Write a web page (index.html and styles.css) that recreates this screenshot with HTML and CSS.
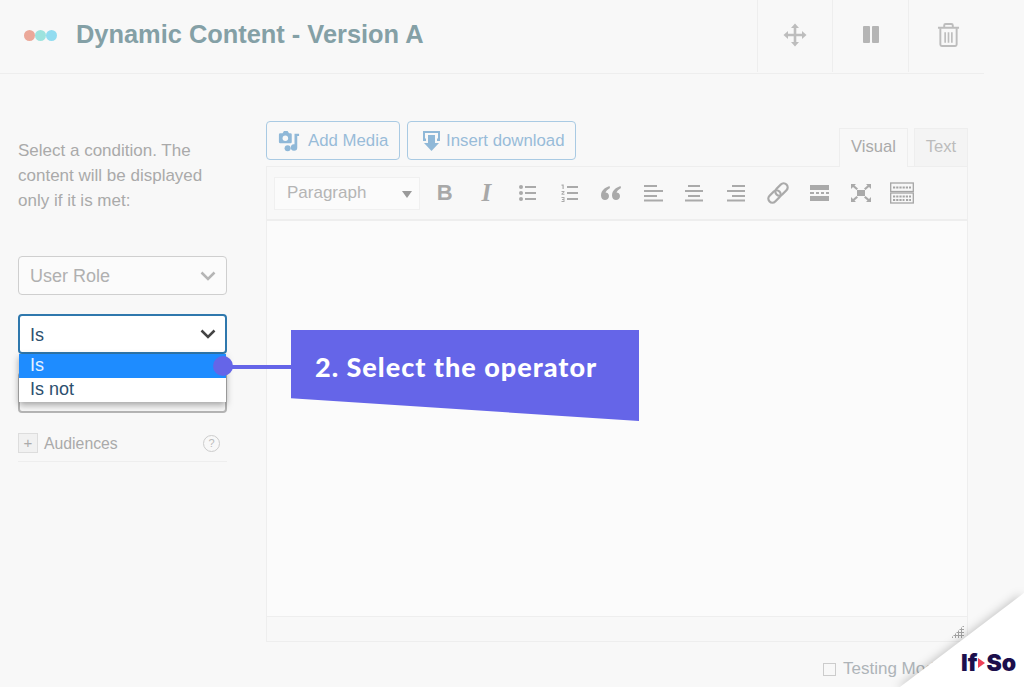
FILE: index.html
```html
<!DOCTYPE html>
<html lang="en">
<head>
    <meta charset="UTF-8">
    <meta name="viewport" content="width=device-width, initial-scale=1.0">
    <title>Dynamic Content - Version A</title>
    <link rel="stylesheet" href="styles.css">
</head>
<body>
<div class="page">

    <!-- Header -->
    <header class="version-header">
        <div class="dots">
            <span class="dot dot-red"></span>
            <span class="dot dot-green"></span>
            <span class="dot dot-blue"></span>
        </div>
        <h1 class="version-title">Dynamic Content - Version A</h1>
        <div class="version-actions">
            <div class="action action-move">
                <svg width="24" height="24" viewBox="0 0 24 24" fill="none" stroke="#bdbdbd" stroke-width="2.600"><path d="M12 3v18M3 12h18"/><path d="M12 0.500l4 4.500H8zM12 23.500l4-4.500H8zM0.500 12L5 8v8zM23.500 12L19 8v8z" fill="#bdbdbd" stroke="none"/></svg>
            </div>
            <div class="action action-pause">
                <svg width="16" height="17" viewBox="0 0 16 17" fill="#b5b5b5"><rect width="7" height="17" rx="1"/><rect x="9" width="7" height="17" rx="1"/></svg>
            </div>
            <div class="action action-trash">
                <svg width="23" height="24" viewBox="0 0 24 25" fill="none" stroke="#bdbdbd" stroke-width="2"><path d="M1 5h22M7.500 5V2.500q0-1.500 1.500-1.500h6q1.500 0 1.500 1.500V5"/><path d="M3.500 5.500v17q0 1.500 1.500 1.500h14q1.500 0 1.500-1.500v-17"/><path d="M8.500 9.500v11M12 9.500v11M15.500 9.500v11" stroke-width="1.700"/></svg>
            </div>
        </div>
    </header>

    <div class="version-body">

        <!-- Conditions -->
        <aside class="conditions">
            <p class="conditions-text">Select a condition. The content will be displayed only if it is met:</p>
            <div class="select select-faded">
                <span>User Role</span>
                <svg class="chevron" width="16" height="10" viewBox="0 0 16 10" fill="none" stroke="#b5b5b5" stroke-width="2.500"><path d="M1.500 1.500L8 8l6.500-6.500"/></svg>
            </div>
            <div class="select select-open">
                <span>Is</span>
                <svg class="chevron" width="16" height="10" viewBox="0 0 16 10" fill="none" stroke="#444" stroke-width="2.500"><path d="M1.500 1.500L8 8l6.500-6.500"/></svg>
                <ul class="select-menu">
                    <li class="selected">Is</li>
                    <li>Is not</li>
                </ul>
            </div>
            <div class="select select-under"></div>
            <div class="audiences">
                <span class="plus-box">+</span>
                <span class="audiences-label">Audiences</span>
                <span class="help">?</span>
            </div>
        </aside>

        <!-- Editor -->
        <section class="editor-wrap">
            <div class="media-row">
                <button class="media-button media-add">
                    <svg width="22" height="22" viewBox="0 0 24 24" fill="#8fb8d8"><path d="M1 5q0-1.500 1.500-1.500H5L6.500 1h4L12 3.500h1.500Q15 3.500 15 5v8q0 1.500-1.500 1.500h-11Q1 14.500 1 13z"/><circle cx="8" cy="9" r="3" fill="#f8f8f8"/><path d="M18 4h5v2.500h-2v12.500a3.500 3.500 0 1 1-3-3.400z"/><circle cx="10.500" cy="20" r="3.300"/></svg>
                    Add Media
                </button>
                <button class="media-button media-download">
                    <svg width="17" height="22" viewBox="0 0 17 22" fill="#8fb8d8"><path d="M0 1h17v10h-3V8.500h1V3H2v5.500h1V11H0z"/><path d="M5 5h7v8h4l-7.500 8L1 13h4z"/></svg>
                    Insert download
                </button>
                <div class="editor-tabs">
                    <span class="tab tab-active">Visual</span>
                    <span class="tab">Text</span>
                </div>
            </div>

            <div class="editor">
                <div class="toolbar">
                    <div class="format-select">
                        <span>Paragraph</span>
                        <i class="caret"></i>
                    </div>
                    <span class="tool tool-letter tool-bold">B</span>
                    <span class="tool tool-letter tool-italic">I</span>
                    <span class="tool">
                        <svg width="20" height="20" viewBox="0 0 20 20" fill="#aaa"><circle cx="3" cy="4" r="2"/><circle cx="3" cy="10" r="2"/><circle cx="3" cy="16" r="2"/><rect x="7" y="3" width="11" height="2"/><rect x="7" y="9" width="11" height="2"/><rect x="7" y="15" width="11" height="2"/></svg>
                    </span>
                    <span class="tool">
                        <svg width="20" height="20" viewBox="0 0 20 20" fill="#aaa"><path d="M1.500 1.500h2.200v4.500H2.500V2.700h-1zM1.500 8h3v.900l-1.800 1.800h1.800v1h-3v-.900l1.800-1.800H1.500zM1.500 14h3v5h-3v-1h2v-1h-1.500v-1h1.500v-1h-2z"/><rect x="7" y="3" width="11" height="2"/><rect x="7" y="9" width="11" height="2"/><rect x="7" y="15" width="11" height="2"/></svg>
                    </span>
                    <span class="tool">
                        <svg width="22" height="18" viewBox="0 0 22 18" fill="#aaa"><path d="M9.500 2C5 3.500 1 6.500 1 11.500 1 14.500 3 16 5 16s4-1.500 4-4-2-3.500-3.500-3.500c.5-1.500 2-3 4.500-4.500zM20.500 2C16 3.500 12 6.500 12 11.500c0 3 2 4.500 4 4.500s4-1.500 4-4-2-3.500-3.500-3.500c.5-1.500 2-3 4.500-4.500z"/></svg>
                    </span>
                    <span class="tool">
                        <svg width="20" height="18" viewBox="0 0 20 18" fill="#aaa"><rect x="1" y="1" width="13" height="2"/><rect x="1" y="6" width="19" height="2"/><rect x="1" y="11" width="13" height="2"/><rect x="1" y="15.500" width="19" height="2"/></svg>
                    </span>
                    <span class="tool">
                        <svg width="20" height="18" viewBox="0 0 20 18" fill="#aaa"><rect x="4" y="1" width="12" height="2"/><rect x="1" y="6" width="18" height="2"/><rect x="4" y="11" width="12" height="2"/><rect x="1" y="15.500" width="18" height="2"/></svg>
                    </span>
                    <span class="tool">
                        <svg width="20" height="18" viewBox="0 0 20 18" fill="#aaa"><rect x="6" y="1" width="13" height="2"/><rect x="1" y="6" width="18" height="2"/><rect x="6" y="11" width="13" height="2"/><rect x="1" y="15.500" width="18" height="2"/></svg>
                    </span>
                    <span class="tool">
                        <svg width="24" height="24" viewBox="0 0 24 24" fill="none" stroke="#aaa" stroke-width="2.300"><rect x="1.500" y="11.500" width="14" height="8" rx="4" transform="rotate(-45 8.500 15.500)"/><rect x="8.500" y="4.500" width="14" height="8" rx="4" transform="rotate(-45 15.500 8.500)"/></svg>
                    </span>
                    <span class="tool">
                        <svg width="20" height="18" viewBox="0 0 20 18" fill="#aaa"><rect x="1" y="1" width="19" height="5"/><rect x="1" y="8" width="4" height="2"/><rect x="7" y="8" width="3" height="2"/><rect x="12" y="8" width="3" height="2"/><rect x="17" y="8" width="3" height="2"/><rect x="1" y="12" width="19" height="5"/></svg>
                    </span>
                    <span class="tool">
                        <svg width="22" height="20" viewBox="0 0 22 20" fill="#aaa"><rect x="7" y="7" width="8" height="6"/><path d="M1 1h5L4.500 2.500 8 5.500 6.500 7 3 4 1 6zM21 1h-5l1.500 1.500L14 5.500 15.500 7 19 4l2 2zM1 19h5l-1.500-1.500L8 14.500 6.500 13 3 16l-2-2zM21 19h-5l1.500-1.500L14 14.500l1.500-1.500L19 16l2-2z"/></svg>
                    </span>
                    <span class="tool">
                        <svg width="24" height="22" viewBox="0 0 24 22" fill="none" stroke="#a5a5a5" stroke-width="1.300"><rect x=".7" y="1" width="22.600" height="8.500"/><rect x=".7" y="11" width="22.600" height="10"/><path d="M3 5.500h18M3 14.500h18M3 18h11.500M16 18h5" stroke-width="2.200" stroke-dasharray="2.200 1"/></svg>
                    </span>
                </div>
                <div class="editor-content"></div>
                <div class="status-bar"><i class="resize-grip"></i></div>
            </div>

            <label class="testing-mode">
                <span class="checkbox"></span>
                Testing Mode
            </label>
        </section>
    </div>

    <!-- Callout -->
    <div class="callout-line"></div>
    <div class="callout-dot"></div>
    <div class="callout">2. Select the operator</div>

    <!-- Corner logo -->
    <div class="corner">
        <div class="corner-fold"></div>
    </div>
    <div class="logo">If<i class="logo-arrow"></i>So</div>
</div>
</body>
</html>
```

FILE: styles.css
```css
* {
    margin: 0;
    padding: 0;
    box-sizing: border-box;
}

html, body {
    height: 100%;
    overflow: hidden;
}

body {
    background-color: #f8f8f8;
    font-family: "Liberation Sans", Arial, sans-serif;
    color: #aaa;
}

.page {
    position: relative;
    width: 1024px;
    height: 687px;
    overflow: hidden;
}

/* Header */
.version-header {
    display: flex;
    align-items: center;
    width: 984px;
    height: 74px;
    padding: 0 0 4px 24px;
    border-bottom: 1px solid #eee;
}

.dots {
    display: flex;
    width: 52px;
    margin-top: 2px;
}

.dot {
    width: 11px;
    height: 11px;
    border-radius: 50%;
}

.dot-red { background-color: #eba899; }
.dot-green { background-color: #9de3de; }
.dot-blue { background-color: #92dcf0; }

.version-title {
    flex: 1;
    font-size: 25.400px;
    font-weight: bold;
    color: #84a0a6;
}

.version-actions {
    display: flex;
    align-self: flex-start;
}

.action {
    display: flex;
    align-items: center;
    justify-content: center;
    height: 72px;
    padding-bottom: 3px;
    border-left: 1px solid #eee;
}

.action-move { width: 75px; }
.action-pause { width: 76px; }
.action-trash { width: 76px; padding-left: 4px; }

/* Layout below header */
.version-body {
    display: flex;
    padding: 47px 0 0 18px;
}

/* Conditions */
.conditions {
    width: 209px;
    margin-right: 39px;
    padding-top: 17px;
}

.conditions-text {
    font-size: 17px;
    line-height: 25px;
    margin-bottom: 43px;
}

.select {
    position: relative;
    display: flex;
    align-items: center;
    justify-content: space-between;
    height: 39px;
    margin-bottom: 19px;
    padding: 0 10px 0 11px;
    border: 1px solid #cfcfcf;
    border-radius: 4px;
    font-size: 18px;
}

.select span {
    padding-top: 2px;
}

.select-faded {
    background-color: #fbfbfb;
    color: #b0b0b0;
}

.select-open {
    height: 40px;
    background-color: #fff;
    border: 2px solid #2f78ad;
    padding-left: 10px;
    padding-right: 9px;
    color: #2c4f6e;
}

.select-under {
    border: 2px solid #b5b5b5;
    height: 41px;
    margin-top: -1px;
    margin-bottom: 20px;
}

.select-menu {
    position: absolute;
    top: 38px;
    left: -1px;
    right: -1px;
    z-index: 2;
    list-style: none;
    background-color: #fff;
    box-shadow: 0 3px 7px rgba(0, 0, 0, 0.35);
    font-size: 18px;
}

.select-menu li {
    height: 24px;
    line-height: 23px;
    padding-left: 11px;
}

.select-menu .selected {
    background-color: #1e8cff;
    color: #e6f2ff;
}

.audiences {
    display: flex;
    align-items: center;
    height: 29px;
    padding-bottom: 8px;
    border-bottom: 1px solid #eee;
    font-size: 15.800px;
}

.plus-box {
    width: 20px;
    height: 20px;
    margin-right: 6px;
    border: 1px solid #ddd;
    background-color: #f1f1f1;
    text-align: center;
    line-height: 17px;
    font-size: 15px;
}

.audiences-label {
    flex: 1;
    padding-top: 1px;
}

.help {
    width: 17px;
    height: 17px;
    margin-right: 7px;
    border: 1px solid #ccc;
    border-radius: 50%;
    text-align: center;
    line-height: 15px;
    font-size: 11px;
    color: #bbb;
}

/* Editor */
.editor-wrap {
    width: 702px;
}

.media-row {
    display: flex;
    height: 45px;
}

.media-button {
    display: flex;
    align-items: center;
    height: 39px;
    margin-right: 7px;
    background: none;
    border: 1px solid #a9cae3;
    border-radius: 4px;
    font-family: inherit;
    font-size: 16.800px;
    color: #98bcd9;
}

.media-add {
    width: 134px;
    gap: 8px;
    padding-left: 11px;
}

.media-download {
    width: 169px;
    gap: 6px;
    padding-left: 15px;
}

.editor-tabs {
    display: flex;
    align-items: flex-end;
    gap: 6px;
    margin-left: auto;
}

.tab {
    display: block;
    width: 54px;
    height: 38px;
    background-color: #f4f4f4;
    border: 1px solid #eee;
    border-bottom: none;
    text-align: center;
    line-height: 36px;
    font-size: 16.600px;
    color: #bcbcbc;
}

.tab-active {
    position: relative;
    top: 1px;
    width: 69px;
    height: 39px;
    background-color: #f8f8f8;
    color: #aaa;
}

.editor {
    border: 1px solid #eee;
    background-color: #fbfbfb;
}

.toolbar {
    display: flex;
    align-items: center;
    height: 54px;
    padding-left: 7px;
    background-color: #f8f8f8;
    border-bottom: 2px solid #eee;
}

.format-select {
    display: flex;
    align-items: center;
    justify-content: space-between;
    width: 146px;
    height: 33px;
    margin-right: 4px;
    padding: 0 7px 0 12px;
    background-color: #fbfbfb;
    border: 1px solid #f0f0f0;
    font-size: 17px;
    color: #b5b5b5;
}

.caret {
    width: 0;
    height: 0;
    margin-top: 2px;
    border-left: 5px solid transparent;
    border-right: 5px solid transparent;
    border-top: 7px solid #9a9a9a;
}

.tool {
    display: flex;
    align-items: center;
    justify-content: center;
    width: 41.600px;
    height: 33px;
}

.tool-letter {
    color: #a8a8a8;
}

.tool-bold {
    font-size: 22px;
    font-weight: bold;
}

.tool-italic {
    font-family: "Liberation Serif", serif;
    font-size: 25px;
    font-style: italic;
    font-weight: bold;
}

.editor-content {
    height: 395px;
}

.status-bar {
    position: relative;
    height: 25px;
    background-color: #f8f8f8;
    border-top: 1px solid #eee;
}

.resize-grip {
    position: absolute;
    right: 3px;
    bottom: 3px;
    width: 13px;
    height: 13px;
    background: radial-gradient(circle, #a5a5a5 1.100px, transparent 1.200px) 0 0 / 3px 3px;
    clip-path: polygon(100% 0, 100% 100%, 0 100%);
}

.testing-mode {
    display: flex;
    align-items: center;
    gap: 7px;
    margin-top: 17px;
    margin-left: 557px;
    font-size: 17px;
    color: #aeb4b8;
    white-space: nowrap;
}

.checkbox {
    width: 13px;
    height: 13px;
    border: 1px solid #ccc;
}

/* Callout */
.callout-line {
    position: absolute;
    left: 228px;
    top: 365px;
    width: 64px;
    height: 4px;
    background-color: #6565e8;
}

.callout-dot {
    position: absolute;
    left: 213px;
    top: 356px;
    z-index: 3;
    width: 20px;
    height: 20px;
    border-radius: 50%;
    background-color: #6565e8;
}

.callout {
    position: absolute;
    left: 291px;
    top: 330px;
    width: 348px;
    height: 91px;
    padding: 20px 0 0 24px;
    background-color: #6565e8;
    clip-path: polygon(0 0, 100% 0, 100% 100%, 0 75%);
    font-family: Lato, sans-serif;
    font-weight: 900;
    font-size: 27px;
    letter-spacing: 1px;
    color: #fff;
}

/* Corner */
.corner {
    position: absolute;
    right: 0;
    bottom: 0;
    width: 130px;
    height: 100px;
    filter: drop-shadow(-3px 1px 5px rgba(0, 0, 0, 0.22));
}

.corner-fold {
    width: 100%;
    height: 100%;
    background-color: #fff;
    clip-path: polygon(100% 6px, 100% 100%, 6px 100%);
}

.logo {
    position: absolute;
    left: 961px;
    top: 649px;
    display: flex;
    align-items: center;
    font-family: Inter, sans-serif;
    font-weight: 900;
    font-size: 23px;
    color: #1c0f4c;
}

.logo-arrow {
    width: 0;
    height: 0;
    margin: 0 1px;
    border-top: 5px solid transparent;
    border-bottom: 5px solid transparent;
    border-left: 7px solid #ee4056;
}
```
